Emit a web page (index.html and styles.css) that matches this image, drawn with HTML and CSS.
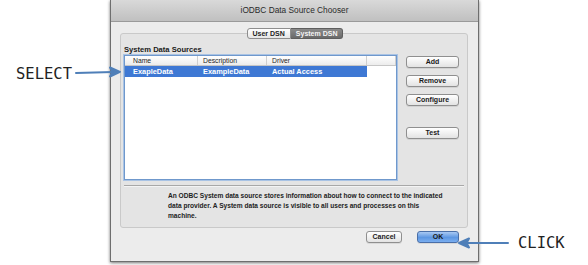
FILE: index.html
```html
<!DOCTYPE html>
<html lang="en">
<head>
    <meta charset="UTF-8">
    <title>iODBC Data Source Chooser</title>
    <link rel="stylesheet" href="styles.css">
</head>
<body>

<div class="stage">
    <div class="window">
        <div class="titlebar">iODBC Data Source Chooser</div>

        <div class="window-body">
            <div class="group">
                <div class="tabs">
                    <span class="tab">User DSN</span>
                    <span class="tab selected">System DSN</span>
                </div>

                <div class="group-label">System Data Sources</div>

                <div class="content">
                    <div class="list">
                        <div class="list-header">
                            <span class="col col-name">Name</span>
                            <span class="col col-desc">Description</span>
                            <span class="col col-driver">Driver</span>
                            <span class="col col-rest"></span>
                        </div>
                        <div class="list-row selected">
                            <span class="col col-name">ExapleData</span>
                            <span class="col col-desc">ExampleData</span>
                            <span class="col col-driver">Actual Access</span>
                        </div>
                    </div>

                    <div class="side-buttons">
                        <button class="btn">Add</button>
                        <button class="btn">Remove</button>
                        <button class="btn">Configure</button>
                        <button class="btn btn-test">Test</button>
                    </div>
                </div>

                <div class="separator"></div>

                <p class="description">
                    An ODBC System data source stores information about how to connect to the indicated<br>
                    data provider. A System data source is visible to all users and processes on this<br>
                    machine.
                </p>
            </div>

            <div class="footer">
                <button class="btn btn-cancel">Cancel</button>
                <button class="btn btn-default">OK</button>
            </div>
        </div>
    </div>

    <div class="note note-select">SELECT</div>
    <div class="note note-click">CLICK</div>

    <svg class="arrows" width="588" height="265" viewBox="0 0 588 265">
        <g stroke="#4f7fb8" stroke-width="2" fill="#4f7fb8" stroke-linecap="round" stroke-linejoin="round">
            <line x1="76" y1="73" x2="113" y2="72" />
            <path d="M120 71.8 L110 67.5 L112.5 72 L110 76.5 Z" />
            <line x1="508" y1="243" x2="466" y2="243" />
            <path d="M459 243 L469 238.5 L466.5 243 L469 247.5 Z" />
        </g>
    </svg>
</div>

</body>
</html>
```

FILE: styles.css
```css
html, body {
    margin: 0;
    padding: 0;
    background-color: #fff;
}

body {
    width: 588px;
    height: 265px;
    overflow: hidden;
    font-family: "Liberation Sans", Arial, sans-serif;
    font-size: 8px;
    color: #1e1e1e;
}

.stage {
    position: relative;
    width: 588px;
    height: 265px;
}

.window {
    margin-left: 110px;
    width: 367px;
    height: 261px;
    display: flex;
    flex-direction: column;
    background-color: #ececec;
    border: 1px solid #6e6e6e;
    border-top: none;
    box-shadow: 0 1px 3px rgba(0, 0, 0, 0.55);
}

.titlebar {
    height: 21px;
    line-height: 21px;
    text-align: center;
    font-size: 8.3px;
    color: #2a2a2a;
    background: linear-gradient(#d9d9d9, #c0c0c0);
    border-bottom: 1px solid #9a9a9a;
}

.window-body {
    flex: 1;
    padding: 11px 10px 0 9px;
    display: flex;
    flex-direction: column;
}

.group {
    height: 193px;
    background-color: #e4e4e4;
    border: 1px solid #c9c9c9;
    border-radius: 3px;
    padding: 0 3px;
    display: flex;
    flex-direction: column;
}

.tabs {
    display: flex;
    justify-content: center;
    margin-top: -6px;
    margin-left: 2px;
}

.tab {
    height: 9px;
    line-height: 9px;
    padding: 0 5px;
    font-size: 7px;
    font-weight: bold;
    background: linear-gradient(#ffffff, #e6e6e6);
    border: 1px solid #8d8d8d;
    border-radius: 3px 0 0 3px;
}

.tab.selected {
    color: #f4f4f4;
    background: linear-gradient(#8a8a8a, #6a6a6a);
    border-color: #5e5e5e;
    border-left: none;
    border-radius: 0 3px 3px 0;
}

.group-label {
    margin-top: 5px;
    height: 11px;
    line-height: 11px;
    font-size: 7.6px;
    font-weight: bold;
    color: #1a1a1a;
}

.content {
    display: flex;
    align-items: flex-start;
}

.list {
    width: 271px;
    height: 123px;
    background-color: #fff;
    border: 1px solid #6f98cc;
    box-shadow: 0 0 0 1px #a9c3e4;
}

.list-header {
    display: flex;
    height: 9px;
    line-height: 9px;
    font-size: 6.8px;
    background: linear-gradient(#ffffff, #ececec);
    border-bottom: 1px solid #c6c6c6;
}

.list-row {
    display: flex;
    height: 11px;
    line-height: 11px;
    font-size: 7.4px;
    font-weight: bold;
}

.list-row.selected {
    width: 242px;
    color: #fff;
    background-color: #3e78d4;
}

.col {
    box-sizing: border-box;
    padding-left: 8px;
    white-space: nowrap;
}

.list-header .col {
    border-right: 1px solid #cfcfcf;
}

.col-name { width: 73px; }
.col-desc { width: 69px; padding-left: 5px; }
.col-driver { width: 100px; padding-left: 5px; }
.col-rest { flex: 1; }

.side-buttons {
    margin-left: 9px;
    margin-top: 1px;
    display: flex;
    flex-direction: column;
    gap: 7px;
}

.btn {
    width: 53px;
    height: 12px;
    padding: 0;
    font-family: "Liberation Sans", Arial, sans-serif;
    font-size: 7px;
    font-weight: bold;
    line-height: 10px;
    color: #1a1a1a;
    background: linear-gradient(#ffffff, #e3e3e3);
    border: 1px solid #8f8f8f;
    border-radius: 3px;
    box-shadow: 0 1px 0 rgba(0, 0, 0, 0.08);
}

.btn-test {
    margin-top: 14px;
}

.separator {
    margin-top: 5px;
    height: 1px;
    background-color: #a8a8a8;
    border-bottom: 1px solid #f4f4f4;
}

.description {
    margin: 4px 0 0 44px;
    font-size: 6.6px;
    font-weight: bold;
    line-height: 10px;
    white-space: nowrap;
    color: #222;
}

.footer {
    display: flex;
    justify-content: flex-end;
    gap: 15px;
    margin-top: 3px;
    padding-right: 9px;
}

.btn-cancel {
    width: 36px;
}

.btn-default {
    width: 42px;
    background: linear-gradient(#a9c9f3, #5d97e2 55%, #7aaef0);
    border-color: #4a6fa8;
}

.note {
    position: absolute;
    font-family: "DejaVu Sans Mono", "Liberation Mono", monospace;
    font-size: 15.5px;
    line-height: 16px;
    color: #222;
}

.note-select {
    left: 16px;
    top: 66px;
}

.note-click {
    left: 518px;
    top: 235px;
}

.arrows {
    position: absolute;
    left: 0;
    top: 0;
}
```
